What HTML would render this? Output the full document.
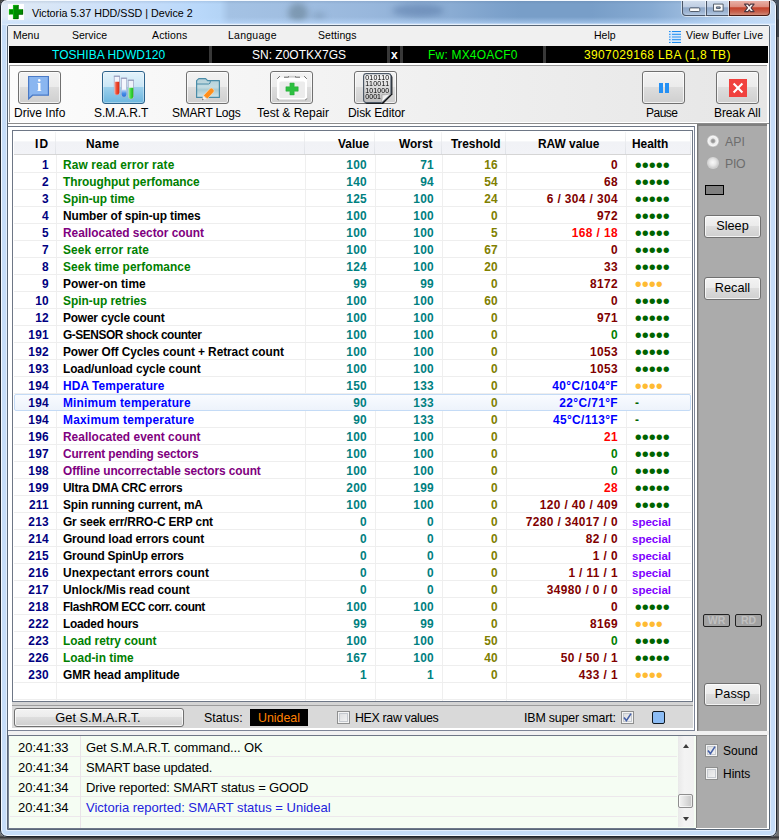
<!DOCTYPE html>
<html lang="en"><head><meta charset="utf-8"><title>Victoria 5.37 HDD/SSD | Device 2</title>
<style>
*{box-sizing:border-box;margin:0;padding:0}
html,body{width:779px;height:840px;overflow:hidden}
body{position:relative;background:linear-gradient(to bottom,#6f6f6f 0,#6f6f6f 836px,#26282c 837px,#4a4a4a 838px,#7c7c7c 840px);font-family:"Liberation Sans",sans-serif;font-size:12px;color:#000}
.win,.win *,.glow,.frame{position:absolute}
.win{left:0;top:0;width:777px;height:837px;border-radius:6px 6px 7px 7px;background:#c6ddf8;overflow:hidden}
.frame{left:0;top:-1px;width:777px;height:838px;border:1px solid #1f242c;border-radius:7px}
.glow{left:1px;top:0;width:775px;height:836px;border:1px solid #f4f9ff;border-radius:6px}
.tbar{left:1px;top:0;width:775px;height:25px;background:linear-gradient(to right,#e2ebf6 0,#dae7f6 40px,#cadffa 120px,#b9d8fa 198px,#b4d4f6 219px,#a4c2e4 228px,#a0bee1 290px,#98b7dc 370px,#8aacd3 450px,#7ca1cb 500px,#789ec8 520px,#789ec8 590px,#86aad2 650px,#a2c0e2 700px,#bcd4ee 740px,#c8dcf2 775px)}
.tsh{left:1px;top:0;width:775px;height:25px;background:linear-gradient(to bottom,rgba(240,245,250,.95) 0,rgba(240,245,250,.95) 1px,rgba(60,80,110,.12) 1px,rgba(60,80,110,0) 4px,rgba(255,255,255,0) 17px,rgba(190,220,255,.55) 23px,rgba(215,232,252,.9) 24px,rgba(215,232,252,.9) 25px)}
.title{left:32px;top:6px;font-size:10.7px;line-height:14px;white-space:pre;color:#000}
.appico{left:8px;top:4px;width:16px;height:16px;background:#fff}
.blob{border-radius:50%;filter:blur(3px)}
/* caption buttons */
.cap{top:0;height:16px;border:1px solid #4a5566;border-top:0;box-shadow:0 0 0 1px rgba(255,255,255,.55)}
.cmin{left:682px;width:25px;border-radius:0 0 0 4px;background:linear-gradient(#d3dfee 0,#bfcee3 45%,#90a8c8 52%,#9db4d2 80%,#b5c9e2 100%)}
.cmax{left:706px;width:24px;background:linear-gradient(#d3dfee 0,#bfcee3 45%,#90a8c8 52%,#9db4d2 80%,#b5c9e2 100%)}
.ccls{left:729px;width:41px;border-color:#4a1a12;border-radius:0 0 4px 0;background:linear-gradient(#eab5ac 0,#dd8e80 45%,#c4412a 52%,#c7624e 80%,#cf8a78 100%)}
/* client */
.client{left:7px;top:25px;width:763px;height:805px;border:1px solid #586676;border-radius:2px 2px 0 0;background:#fff;box-shadow:0 0 0 1px rgba(255,255,255,.5)}
.menubar{left:8px;top:26px;width:761px;height:20px;background:#f0f0f0}
.mi{top:28px;font-size:10.5px;line-height:14px;white-space:pre}
.black{left:9px;top:46px;width:759px;height:17px;background:#000}
.bsep{top:46px;width:3px;height:17px;background:#383838}
.bt{top:48px;height:15px;line-height:15px;font-size:12px;white-space:pre}
/* toolbar */
.tool{left:9px;top:65px;width:758px;height:57px;border-top:1px solid #9a9a9a;border-left:1px solid #9a9a9a;background:linear-gradient(to right,#fcfcfc,#e6e6e6)}
.tb{top:71px;width:43px;height:33px;border:1px solid #707070;border-radius:3px;background:linear-gradient(#f3f3f3 0,#ebebeb 48%,#dddddd 50%,#cfcfcf 100%);box-shadow:inset 0 0 0 1px rgba(255,255,255,.7)}
.tb.on{border-color:#2c628b;background:linear-gradient(#e4f3fb 0,#c9e6f6 48%,#9cd0ec 50%,#6cb6df 100%);box-shadow:inset 0 0 0 1px rgba(255,255,255,.35)}
.tl{top:106px;line-height:15px;height:15px;font-size:12px;white-space:pre}
.tline{left:8px;top:123px;width:761px;height:1px;background:#8c8c8c}
/* main container */
.cont{left:8px;top:126px;width:687px;height:605px;background:#fff;border-top:1px solid #6e7786;border-right:1px solid #7c8496;border-bottom:1px solid #7c8496}
.tbl{left:12px;top:130px;width:681px;height:572px;border:1px solid #6e7786;background:#fff}
.hdr{left:14px;top:132px;width:677px;height:23px;background:linear-gradient(#fff 0,#fff 40%,#f1f2f6 45%,#f2f3f7 100%);border-bottom:1px solid #d5d5d5}
.hsep{top:132px;width:1px;height:22px;background:linear-gradient(#f4f4f4,#dfe2e8)}
.hc{top:137px;height:15px;line-height:15px;font-size:11.9px;font-weight:bold;white-space:pre}
.vl{top:155px;width:1px;height:546px;background:#efefef}
.grid{left:0;top:0;width:0;height:0}
.row{left:14px;width:677px;height:18px;border-bottom:1px solid #eeeeee}
.row.sel{border:1px solid #c4dbf6;border-radius:2px;background:linear-gradient(#f9fbff,#edf3fb);margin-top:1px;height:17px}
.c{top:2px;height:17px;line-height:17px;font-size:11.9px;font-weight:bold;white-space:pre}
.sel .c{top:0px;margin-left:-1px}
.id{left:0;width:35px;text-align:right;color:#000080;letter-spacing:.3px}
.nm{left:49px}
.va{left:289px;width:64px;text-align:right;color:#008080;letter-spacing:.3px}
.wo{left:362px;width:58px;text-align:right;color:#008080;letter-spacing:.3px}
.th{left:428px;width:56px;text-align:right;color:#808000;letter-spacing:.3px}
.rw{left:492px;width:112px;text-align:right;letter-spacing:.4px}
.he{left:612px;width:65px}
.dots{left:8.8px;top:0;font-size:20px;line-height:17px;letter-spacing:0;font-weight:normal}
.dg{color:#006400}.dy{color:#ffbb33}
.sp{left:6px;top:0;color:#8000ff;font-size:11.5px}
.dash{left:9px;top:0;color:#006400}
/* status panel */
.stat{left:12px;top:702px;width:681px;height:26px;background:#d9d9d9;border-top:3px solid #d4d4d4}
.stat2{left:12px;top:705px;width:681px;height:1px;background:#9c9c9c}
.btn{border:1px solid #707070;border-radius:3px;background:linear-gradient(#f3f3f3 0,#ebebeb 48%,#dddddd 50%,#cfcfcf 100%);box-shadow:inset 0 0 0 1px rgba(255,255,255,.75);text-align:center;font-size:12px;white-space:pre}
.st{top:710px;height:15px;line-height:15px;font-size:12px;white-space:pre}
.chk{width:13px;height:13px;border:1px solid #8e8f8f;background:linear-gradient(135deg,#d9dadc,#f6f6f6);box-shadow:inset 0 0 0 1px #f4f4f4, inset 0 0 0 2px #c5c9cf}
/* right panel */
.rp{left:697px;top:124px;width:70px;height:607px;background:#ababab;border-top:2px solid #7f7f7f;border-left:1px solid #777;box-shadow:inset 1px 0 0 #999}
.rp2{left:696px;top:735px;width:71px;height:93px;background:#ababab;border-top:1px solid #8a8a8a;border-left:1px solid #858585}
.radio{width:11.4px;height:11.4px;border-radius:50%;background:radial-gradient(circle at 50% 50%,#8c8c8c 0,#a6a6a6 1.8px,#e9e9e9 2.9px,#f6f6f6 4.8px,#cfcfcf 5.7px)}
.radio.off{background:radial-gradient(circle at 48% 45%,#f8f8f8 0,#e8e8e8 3px,#cdcdcd 5.7px)}
.dis{color:#6d6d6d}
.led{border:1px solid #000;background:#808080}
.ind{border:1px solid #222;border-radius:2px;background:#a2a2a2;color:#c0c0c0;font-size:10.5px;font-weight:bold;text-align:center;line-height:11px;height:13px;width:27px}
/* log */
.log{left:8px;top:735px;width:688px;height:94px;background:#f5fdf3;border-top:1px solid #6e7786;border-left:1px solid #7a8496;border-bottom:1px solid #6e788a}
.ll{left:10px;width:667px;height:1px;background:#ede8ec}
.lt{font-size:13px;line-height:20px;height:20px;white-space:pre}
.sb{left:678px;top:736px;width:16px;height:91px;background:linear-gradient(to right,#e9e9e9,#f3f3f3 40%,#f1f1f1)}
.thumb{left:678px;top:794px;width:15px;height:14px;border:1px solid #8e8e8e;border-radius:2px;background:linear-gradient(to right,#f4f4f4,#e0e0e0 45%,#c6c6c6);box-shadow:inset 0 0 0 1px rgba(255,255,255,.6)}
.arr{width:0;height:0;border-left:3.5px solid transparent;border-right:3.5px solid transparent}

</style></head>
<body>
<div style="position:absolute;left:0;top:0;width:7px;height:7px;background:#474747"></div><div style="position:absolute;left:770px;top:0;width:9px;height:37px;background:linear-gradient(#45515e 0,#45515e 19px,#3e4248 20px,#3e4248 100%)"></div>
<div class="win">
<div class="tbar"></div><div class="blob" style="left:288px;top:3px;width:20px;height:20px;background:rgba(70,95,105,.38)"></div><div class="blob" style="left:312px;top:12px;width:14px;height:8px;background:rgba(70,95,120,.22)"></div><div class="blob" style="left:392px;top:4px;width:52px;height:13px;background:rgba(60,90,140,.34)"></div><div class="tsh"></div>
<div class="appico"></div><svg style="left:8px;top:4px" width="16" height="16" viewBox="8 4 16 16"><path d="M13.1 5H18.5V9.2H23V14.6H18.5V19H13.1V14.6H9V9.2H13.1Z" fill="#008c00"/><path d="M13.4 19V5.3H18.5M9.3 14.6V9.5H13.1" fill="none" stroke="#12c412" stroke-width=".7"/><path d="M18.2 5V9.2M22.7 9.4V14.3H18.2V18.7H13.4" fill="none" stroke="#005c00" stroke-width=".7"/></svg>
<div class="title">Victoria 5.37 HDD/SSD | Device 2</div>
<div class="cap cmin"></div><div class="cap cmax"></div><div class="cap ccls"></div>
<svg style="left:680px;top:0" width="92" height="18" viewBox="680 0 92 18"><rect x="689.6" y="7.9" width="10.2" height="3.6" rx="1" fill="#fbfbfb" stroke="#46505e" stroke-width=".9"/>
<path d="M713.5 4.1H723.1V11.1H713.5ZM716.4 6.9V8.4H720.2V6.9Z" fill="#fbfbfb" fill-rule="evenodd" stroke="#46505e" stroke-width=".9"/>
<path d="M744.5 4.1H748L749.3 5.9L750.6 4.1H754.1L751.1 7.85L754.1 11.6H750.6L749.3 9.8L748 11.6H744.5L747.5 7.85Z" fill="#fbfbfb" stroke="#503840" stroke-width="1.1" stroke-linejoin="round"/></svg>
<div class="client"></div>
<div class="menubar"></div>
<span class="mi" style="left:13px">Menu</span>
<span class="mi" style="left:72px">Service</span>
<span class="mi" style="left:152px;letter-spacing:.15px">Actions</span>
<span class="mi" style="left:228px;letter-spacing:.25px">Language</span>
<span class="mi" style="left:318px;letter-spacing:.08px">Settings</span>
<span class="mi" style="left:594px">Help</span>
<span class="mi" style="left:686px;letter-spacing:.1px">View Buffer Live</span>
<svg style="left:668px;top:30px" width="14" height="14" viewBox="668 30 14 14"><rect x="669" y="31" width="12" height="12" fill="#d6e8fb"/><path d="M669 31.5h1.6M672 31.5h9M669 34.3h1.6M672 34.3h9M669 39.7h1.6M672 39.7h9M669 42.5h1.6M672 42.5h9" stroke="#1e8cf0" stroke-width="1"/><path d="M669 37h1.6M672 37h9" stroke="#6ab0f4" stroke-width="1.6"/></svg>
<div class="black"></div>
<div class="bsep" style="left:209px"></div><div class="bsep" style="left:387px"></div><div class="bsep" style="left:400px"></div><div class="bsep" style="left:543px"></div>
<span class="bt" style="left:52px;color:#00ffff;letter-spacing:.05px">TOSHIBA HDWD120</span>
<span class="bt" style="left:252px;color:#fff">SN: Z0OTKX7GS</span>
<span class="bt" style="left:391px;color:#fff;font-weight:bold">x</span>
<span class="bt" style="left:428px;color:#00ff00;letter-spacing:.2px">Fw: MX4OACF0</span>
<span class="bt" style="left:584px;color:#ffff00;letter-spacing:.36px">3907029168 LBA (1,8 TB)</span>
<div class="tool"></div>
<div class="tline"></div>
<div class="tb" style="left:18px"></div>
<div class="tb on" style="left:102px"></div>
<div class="tb" style="left:186px"></div>
<div class="tb" style="left:270px"></div>
<div class="tb" style="left:354px"></div>
<div class="tb" style="left:642px"></div>
<div class="tb" style="left:716px"></div>
<svg style="left:16px;top:69px" width="48" height="37" viewBox="16 69 48 37"><path d="M28.6 76.5H48.4V95.2H32.6L28.6 98.8Z" fill="#8ab6f0" stroke="#4a7ac6" stroke-width="1.2" stroke-linejoin="miter"/><text x="39.3" y="91" text-anchor="middle" font-family="Liberation Serif,serif" font-weight="bold" font-size="16" fill="#fff" style="filter:grayscale(1)">i</text></svg>
<svg style="left:100px;top:69px" width="48" height="37" viewBox="100 69 48 37"><defs><linearGradient id="gr" x1="0" x2="1"><stop offset="0" stop-color="#f4a090"/><stop offset=".45" stop-color="#ee4a30"/><stop offset="1" stop-color="#d82a10"/></linearGradient><linearGradient id="gb" x1="0" x2="0" y1="0" y2="1"><stop offset="0" stop-color="#cfe0f8"/><stop offset=".5" stop-color="#4a90e8"/><stop offset="1" stop-color="#2a70d8"/></linearGradient><linearGradient id="gg" x1="0" x2="1"><stop offset="0" stop-color="#a0eea0"/><stop offset=".5" stop-color="#3ad83a"/><stop offset="1" stop-color="#20b820"/></linearGradient></defs>
<path d="M114.3 76.3V92.4a2.6 2.6 0 0 0 5.2 0V76.3Z" fill="#f2f4fc" stroke="#a4a9c8" stroke-width=".8"/><path d="M114.5 81.8V92.4a2.4 2.4 0 0 0 4.8 0V81.8Z" fill="url(#gr)"/>
<path d="M121.4 78.3V94.5a2.6 2.6 0 0 0 5.2 0V78.3Z" fill="#f4f6fd" stroke="#a4a9c8" stroke-width=".8"/><path d="M121.6 89.5V94.5a2.4 2.4 0 0 0 4.8 0V89.5Z" fill="url(#gb)"/>
<path d="M128.3 80.3V96.6a2.6 2.6 0 0 0 5.2 0V80.3Z" fill="#eef2fa" stroke="#a4a9c8" stroke-width=".8"/><path d="M128.5 87.8V96.6a2.4 2.4 0 0 0 4.8 0V87.8Z" fill="url(#gg)"/>
<path d="M113.8 76.2h6.2M120.9 78.2h6.2M127.8 80.2h6.2" stroke="#9298b8" stroke-width="1"/></svg>
<svg style="left:184px;top:69px" width="48" height="37" viewBox="184 69 48 37"><defs><linearGradient id="gf" x1="0" x2="0" y1="0" y2="1"><stop offset="0" stop-color="#b4d0d8"/><stop offset=".45" stop-color="#c4dce2"/><stop offset=".6" stop-color="#a9cad2"/><stop offset="1" stop-color="#d4e6ea"/></linearGradient></defs>
<path d="M196.6 80.6L198.8 78.6H205.6L207.6 80.7H219.4V97.4H196.6Z" fill="url(#gf)" stroke="#4a8ca8" stroke-width="1.2" stroke-linejoin="round"/><path d="M196.8 84H208.6Q210.4 84 210.4 81" fill="none" stroke="#4a8ca8" stroke-width="1"/>
<g transform="translate(-.3 .8)"><path d="M202.2 99.8L203.6 95.2L207.2 98Z" fill="#f6f6f6" stroke="#dcdcdc" stroke-width=".5"/><path d="M202.2 99.8L202.9 97.5L204.1 98.7Z" fill="#666"/>
<path d="M203.8 94.8L210.4 87.6Q211.6 86.6 212.8 87.8L214 89Q215 90.2 214 91.2L207.6 98Z" fill="#ff8f1c" stroke="#ffe2c0" stroke-width=".6"/></g></svg>
<svg style="left:268px;top:69px" width="48" height="37" viewBox="268 69 48 37"><rect x="277" y="77.4" width="30" height="22.4" rx="1.5" fill="#fff"/><rect x="279.4" y="81.6" width="25.6" height="16.4" rx="1.5" fill="#ececec"/>
<path d="M277.2 78.8L279.8 76.2M306.8 78.8L304.2 76.2M284 77.2H288.6V76.2M300 77.2H295.4V76.2" stroke="#555" stroke-width=".9" fill="none"/><rect x="289" y="75.8" width="6" height="1.8" fill="#cfcfcf"/><path d="M277.2 98.4Q277.4 99.8 278.8 99.9M306.8 98.4Q306.6 99.8 305.2 99.9" stroke="#555" stroke-width=".8" fill="none"/><path d="M279 100.1H305" stroke="#bdbdbd" stroke-width=".7"/>
<path d="M289.9 83H294.2V86.8H298.2V91.2H294.2V94.9H289.9V91.2H285.9V86.8H289.9Z" fill="#2cc040" stroke="#28a838" stroke-width=".5"/></svg>
<svg style="left:352px;top:69px" width="48" height="37" viewBox="352 69 48 37"><defs><linearGradient id="gp" x1="0" x2="0" y1="0" y2="1"><stop offset="0" stop-color="#f6f6f6"/><stop offset="1" stop-color="#bcbcbc"/></linearGradient><linearGradient id="gc" x1="0" x2="1" y1="0" y2="1"><stop offset="0" stop-color="#cfcfcf"/><stop offset=".5" stop-color="#ffffff"/><stop offset="1" stop-color="#e0e0e0"/></linearGradient></defs>
<path d="M366.6 74.8H390.2Q392.2 75 392.4 77V94.6L383 104H366.8Q364.8 103.6 364.6 101.6V77Q364.8 75 366.6 74.8Z" fill="#111"/>
<path d="M366 73.6H388.6Q390.8 73.8 391 76V93.6L381.6 102.6H366Q363.8 102.4 363.6 100.2V76Q363.8 73.8 366 73.6Z" fill="url(#gp)" stroke="#4c5866" stroke-width="1.2"/>
<path d="M381.6 102.4Q382.6 97.4 381.8 94.6Q385.6 95.2 390.8 93.8Z" fill="url(#gc)" stroke="#8c8c8c" stroke-width=".5"/>
<g style="filter:grayscale(1)" font-family="Liberation Sans,sans-serif" font-size="7" fill="#000"><text x="365.2" y="79.9" textLength="24">010110</text><text x="365.2" y="86.4" textLength="24">110011</text><text x="365.2" y="92.9" textLength="24">101000</text><text x="365.2" y="99.4" textLength="15.8">0001</text></g></svg>
<svg style="left:640px;top:69px" width="48" height="37" viewBox="640 69 48 37"><rect x="659" y="83" width="4" height="10" fill="#2490f4"/><rect x="665" y="83" width="4" height="10" fill="#2490f4"/></svg>
<svg style="left:714px;top:69px" width="48" height="37" viewBox="714 69 48 37"><rect x="729" y="79" width="18" height="18" fill="#f0413e"/><path d="M733.6 83.6L742.4 92.4M742.4 83.6L733.6 92.4" stroke="#fff" stroke-width="2.1"/></svg>
<span class="tl" style="left:14px">Drive Info</span>
<span class="tl" style="left:94px;letter-spacing:-.12px">S.M.A.R.T</span>
<span class="tl" style="left:172px;letter-spacing:-.25px">SMART Logs</span>
<span class="tl" style="left:257px">Test &amp; Repair</span>
<span class="tl" style="left:348px;letter-spacing:-.1px">Disk Editor</span>
<span class="tl" style="left:646px;letter-spacing:-.5px">Pause</span>
<span class="tl" style="left:714px;letter-spacing:-.1px">Break All</span>
<div class="cont"></div>
<div class="tbl"></div>
<div class="hdr"></div>
<div class="hsep" style="left:55px"></div><div class="hsep" style="left:304px"></div><div class="hsep" style="left:374px"></div><div class="hsep" style="left:441px"></div><div class="hsep" style="left:505px"></div><div class="hsep" style="left:625px"></div><div class="hsep" style="left:690px"></div>
<div class="vl" style="left:56px"></div><div class="vl" style="left:305px"></div><div class="vl" style="left:375px"></div><div class="vl" style="left:442px"></div><div class="vl" style="left:506px"></div><div class="vl" style="left:626px"></div>
<span class="hc" style="left:35px;letter-spacing:1.2px">ID</span>
<span class="hc" style="left:86px;letter-spacing:.25px">Name</span>
<span class="hc" style="left:338px">Value</span>
<span class="hc" style="left:399px">Worst</span>
<span class="hc" style="left:451px">Treshold</span>
<span class="hc" style="left:538px">RAW value</span>
<span class="hc" style="left:632px">Health</span>
<div class="grid">
<div class="row" style="top:155px"><span class="c id">1</span><span class="c nm" style="color:#008000;letter-spacing:0.123px">Raw read error rate</span><span class="c va">100</span><span class="c wo">71</span><span class="c th">16</span><span class="c rw" style="color:#800000">0</span><span class="c he"><span class="dots dg">•••••</span></span></div>
<div class="row" style="top:172px"><span class="c id">2</span><span class="c nm" style="color:#008000;letter-spacing:-0.034px">Throughput perfomance</span><span class="c va">140</span><span class="c wo">94</span><span class="c th">54</span><span class="c rw" style="color:#800000">68</span><span class="c he"><span class="dots dg">•••••</span></span></div>
<div class="row" style="top:189px"><span class="c id">3</span><span class="c nm" style="color:#008000;letter-spacing:-0.025px">Spin-up time</span><span class="c va">125</span><span class="c wo">100</span><span class="c th">24</span><span class="c rw" style="color:#800000">6 / 304 / 304</span><span class="c he"><span class="dots dg">•••••</span></span></div>
<div class="row" style="top:206px"><span class="c id">4</span><span class="c nm" style="color:#000;letter-spacing:-0.107px">Number of spin-up times</span><span class="c va">100</span><span class="c wo">100</span><span class="c th">0</span><span class="c rw" style="color:#800000">972</span><span class="c he"><span class="dots dg">•••••</span></span></div>
<div class="row" style="top:223px"><span class="c id">5</span><span class="c nm" style="color:#800080;letter-spacing:-0.017px">Reallocated sector count</span><span class="c va">100</span><span class="c wo">100</span><span class="c th">5</span><span class="c rw" style="color:#ff0000">168 / 18</span><span class="c he"><span class="dots dg">•••••</span></span></div>
<div class="row" style="top:240px"><span class="c id">7</span><span class="c nm" style="color:#008000;letter-spacing:0.143px">Seek error rate</span><span class="c va">100</span><span class="c wo">100</span><span class="c th">67</span><span class="c rw" style="color:#800000">0</span><span class="c he"><span class="dots dg">•••••</span></span></div>
<div class="row" style="top:257px"><span class="c id">8</span><span class="c nm" style="color:#008000;letter-spacing:0.073px">Seek time perfomance</span><span class="c va">124</span><span class="c wo">100</span><span class="c th">20</span><span class="c rw" style="color:#800000">33</span><span class="c he"><span class="dots dg">•••••</span></span></div>
<div class="row" style="top:274px"><span class="c id">9</span><span class="c nm" style="color:#000;letter-spacing:0.066px">Power-on time</span><span class="c va">99</span><span class="c wo">99</span><span class="c th">0</span><span class="c rw" style="color:#800000">8172</span><span class="c he"><span class="dots dy">••••</span></span></div>
<div class="row" style="top:291px"><span class="c id">10</span><span class="c nm" style="color:#008000;letter-spacing:-0.015px">Spin-up retries</span><span class="c va">100</span><span class="c wo">100</span><span class="c th">60</span><span class="c rw" style="color:#800000">0</span><span class="c he"><span class="dots dg">•••••</span></span></div>
<div class="row" style="top:308px"><span class="c id">12</span><span class="c nm" style="color:#000;letter-spacing:-0.172px">Power cycle count</span><span class="c va">100</span><span class="c wo">100</span><span class="c th">0</span><span class="c rw" style="color:#800000">971</span><span class="c he"><span class="dots dg">•••••</span></span></div>
<div class="row" style="top:325px"><span class="c id">191</span><span class="c nm" style="color:#000;letter-spacing:-0.433px">G-SENSOR shock counter</span><span class="c va">100</span><span class="c wo">100</span><span class="c th">0</span><span class="c rw" style="color:#008000">0</span><span class="c he"><span class="dots dg">•••••</span></span></div>
<div class="row" style="top:342px"><span class="c id">192</span><span class="c nm" style="color:#000;letter-spacing:-0.076px">Power Off Cycles count + Retract count</span><span class="c va">100</span><span class="c wo">100</span><span class="c th">0</span><span class="c rw" style="color:#800000">1053</span><span class="c he"><span class="dots dg">•••••</span></span></div>
<div class="row" style="top:359px"><span class="c id">193</span><span class="c nm" style="color:#000;letter-spacing:-0.079px">Load/unload cycle count</span><span class="c va">100</span><span class="c wo">100</span><span class="c th">0</span><span class="c rw" style="color:#800000">1053</span><span class="c he"><span class="dots dg">•••••</span></span></div>
<div class="row" style="top:376px"><span class="c id">194</span><span class="c nm" style="color:#0000ff;letter-spacing:0.115px">HDA Temperature</span><span class="c va">150</span><span class="c wo">133</span><span class="c th">0</span><span class="c rw" style="color:#0000ff">40°C/104°F</span><span class="c he"><span class="dots dy">••••</span></span></div>
<div class="row sel" style="top:393px"><span class="c id">194</span><span class="c nm" style="color:#0000ff;letter-spacing:0.183px">Minimum temperature</span><span class="c va">90</span><span class="c wo">133</span><span class="c th">0</span><span class="c rw" style="color:#0000ff">22°C/71°F</span><span class="c he"><span class="dash">-</span></span></div>
<div class="row" style="top:410px"><span class="c id">194</span><span class="c nm" style="color:#0000ff;letter-spacing:0.238px">Maximum temperature</span><span class="c va">90</span><span class="c wo">133</span><span class="c th">0</span><span class="c rw" style="color:#0000ff">45°C/113°F</span><span class="c he"><span class="dash">-</span></span></div>
<div class="row" style="top:427px"><span class="c id">196</span><span class="c nm" style="color:#800080;letter-spacing:0.036px">Reallocated event count</span><span class="c va">100</span><span class="c wo">100</span><span class="c th">0</span><span class="c rw" style="color:#ff0000">21</span><span class="c he"><span class="dots dg">•••••</span></span></div>
<div class="row" style="top:444px"><span class="c id">197</span><span class="c nm" style="color:#800080;letter-spacing:-0.117px">Current pending sectors</span><span class="c va">100</span><span class="c wo">100</span><span class="c th">0</span><span class="c rw" style="color:#008000">0</span><span class="c he"><span class="dots dg">•••••</span></span></div>
<div class="row" style="top:461px"><span class="c id">198</span><span class="c nm" style="color:#800080;letter-spacing:-0.091px">Offline uncorrectable sectors count</span><span class="c va">100</span><span class="c wo">100</span><span class="c th">0</span><span class="c rw" style="color:#008000">0</span><span class="c he"><span class="dots dg">•••••</span></span></div>
<div class="row" style="top:478px"><span class="c id">199</span><span class="c nm" style="color:#000;letter-spacing:-0.219px">Ultra DMA CRC errors</span><span class="c va">200</span><span class="c wo">199</span><span class="c th">0</span><span class="c rw" style="color:#ff0000">28</span><span class="c he"><span class="dots dg">•••••</span></span></div>
<div class="row" style="top:495px"><span class="c id">211</span><span class="c nm" style="color:#000;letter-spacing:-0.148px">Spin running current, mA</span><span class="c va">100</span><span class="c wo">100</span><span class="c th">0</span><span class="c rw" style="color:#800000">120 / 40 / 409</span><span class="c he"><span class="dots dg">•••••</span></span></div>
<div class="row" style="top:512px"><span class="c id">213</span><span class="c nm" style="color:#000;letter-spacing:-0.155px">Gr seek err/RRO-C ERP cnt</span><span class="c va">0</span><span class="c wo">0</span><span class="c th">0</span><span class="c rw" style="color:#800000">7280 / 34017 / 0</span><span class="c he"><span class="sp">special</span></span></div>
<div class="row" style="top:529px"><span class="c id">214</span><span class="c nm" style="color:#000;letter-spacing:-0.126px">Ground load errors count</span><span class="c va">0</span><span class="c wo">0</span><span class="c th">0</span><span class="c rw" style="color:#800000">82 / 0</span><span class="c he"><span class="sp">special</span></span></div>
<div class="row" style="top:546px"><span class="c id">215</span><span class="c nm" style="color:#000;letter-spacing:-0.242px">Ground SpinUp errors</span><span class="c va">0</span><span class="c wo">0</span><span class="c th">0</span><span class="c rw" style="color:#800000">1 / 0</span><span class="c he"><span class="sp">special</span></span></div>
<div class="row" style="top:563px"><span class="c id">216</span><span class="c nm" style="color:#000;letter-spacing:0.05px">Unexpectant errors count</span><span class="c va">0</span><span class="c wo">0</span><span class="c th">0</span><span class="c rw" style="color:#800000">1 / 11 / 1</span><span class="c he"><span class="sp">special</span></span></div>
<div class="row" style="top:580px"><span class="c id">217</span><span class="c nm" style="color:#000;letter-spacing:-0.003px">Unlock/Mis read count</span><span class="c va">0</span><span class="c wo">0</span><span class="c th">0</span><span class="c rw" style="color:#800000">34980 / 0 / 0</span><span class="c he"><span class="sp">special</span></span></div>
<div class="row" style="top:597px"><span class="c id">218</span><span class="c nm" style="color:#000;letter-spacing:-0.42px">FlashROM ECC corr. count</span><span class="c va">100</span><span class="c wo">100</span><span class="c th">0</span><span class="c rw" style="color:#800000">0</span><span class="c he"><span class="dots dg">•••••</span></span></div>
<div class="row" style="top:614px"><span class="c id">222</span><span class="c nm" style="color:#000;letter-spacing:-0.269px">Loaded hours</span><span class="c va">99</span><span class="c wo">99</span><span class="c th">0</span><span class="c rw" style="color:#800000">8169</span><span class="c he"><span class="dots dy">••••</span></span></div>
<div class="row" style="top:631px"><span class="c id">223</span><span class="c nm" style="color:#008000;letter-spacing:-0.021px">Load retry count</span><span class="c va">100</span><span class="c wo">100</span><span class="c th">50</span><span class="c rw" style="color:#008000">0</span><span class="c he"><span class="dots dg">•••••</span></span></div>
<div class="row" style="top:648px"><span class="c id">226</span><span class="c nm" style="color:#008000;letter-spacing:0.001px">Load-in time</span><span class="c va">167</span><span class="c wo">100</span><span class="c th">40</span><span class="c rw" style="color:#800000">50 / 50 / 1</span><span class="c he"><span class="dots dg">•••••</span></span></div>
<div class="row" style="top:665px"><span class="c id">230</span><span class="c nm" style="color:#000;letter-spacing:-0.093px">GMR head amplitude</span><span class="c va">1</span><span class="c wo">1</span><span class="c th">0</span><span class="c rw" style="color:#800000">433 / 1</span><span class="c he"><span class="dots dy">••••</span></span></div>
</div>
<div class="row" style="top:682px"></div>
<div class="stat"></div><div class="stat2"></div>
<div class="btn" style="left:14px;top:708px;width:170px;height:19px;line-height:18px;font-size:12.8px;text-indent:-2px">Get S.M.A.R.T.</div>
<span class="st" style="left:204px;top:711px;font-size:12.4px">Status:</span>
<div style="left:250px;top:709px;width:58px;height:17px;background:#000"></div>
<span class="st" style="left:258px;top:711px;font-size:12.4px;color:#ff8000">Unideal</span>
<div class="chk" style="left:337px;top:711px"></div>
<span class="st" style="left:355px;top:711px;font-size:12.4px;letter-spacing:-.34px">HEX raw values</span>
<span class="st" style="left:524px;top:711px;font-size:12.4px;letter-spacing:-.16px">IBM super smart:</span>
<div class="chk" style="left:621px;top:711px"></div><svg style="left:621px;top:711px" width="13" height="13" viewBox="0 0 13 13"><path d="M3 6.6L5.4 9.6L10 2.6" fill="none" stroke="#4560a8" stroke-width="1.6"/></svg>
<div style="left:652px;top:711px;width:13px;height:13px;border:1px solid #101820;border-radius:2px;background:#8cbcf4"></div>
<div class="rp"></div>
<div class="radio" style="left:707.2px;top:135.2px"></div><span class="st dis" style="left:725px;top:135px;font-size:12.3px">API</span>
<div class="radio off" style="left:707.2px;top:157.3px"></div><span class="st dis" style="left:725px;top:157px;font-size:12.3px;letter-spacing:-.3px">PIO</span>
<div class="led" style="left:705px;top:185px;width:19px;height:10px"></div>
<div class="btn" style="left:704px;top:215px;width:57px;height:23px;line-height:21px;font-size:12.7px">Sleep</div>
<div class="btn" style="left:704px;top:277px;width:57px;height:23px;line-height:21px;font-size:12.7px">Recall</div>
<div class="ind" style="left:703px;top:614px">WR</div><div class="ind" style="left:735px;top:614px">RD</div>
<div class="btn" style="left:704px;top:683px;width:57px;height:23px;line-height:21px;font-size:12.7px">Passp</div>
<div style="left:8px;top:731px;width:761px;height:4px;background:#f1f1f1"></div><div class="log"></div>
<div class="ll" style="top:756px"></div><div class="ll" style="top:776px"></div><div class="ll" style="top:796px"></div><div class="ll" style="top:816px"></div>
<div style="left:80px;top:736px;width:1px;height:92px;background:#e9e4e8"></div>
<span class="lt" style="left:18px;top:738px">20:41:33</span><span class="lt" style="left:86px;top:738px;letter-spacing:-.15px">Get S.M.A.R.T. command... OK</span>
<span class="lt" style="left:18px;top:758px">20:41:34</span><span class="lt" style="left:86px;top:758px;letter-spacing:-.26px">SMART base updated.</span>
<span class="lt" style="left:18px;top:778px">20:41:34</span><span class="lt" style="left:86px;top:778px;letter-spacing:-.15px">Drive reported: SMART status = GOOD</span>
<span class="lt" style="left:18px;top:798px">20:41:34</span><span class="lt" style="left:86px;top:798px;color:#2222dd">Victoria reported: SMART status = Unideal</span>
<div class="sb"></div>
<div class="thumb"></div>
<div class="arr" style="left:683px;top:744px;border-bottom:4px solid #3c3c3c"></div>
<div class="arr" style="left:683px;top:817px;border-top:4px solid #3c3c3c"></div>
<div class="rp2"></div><div style="left:696px;top:828px;width:73px;height:1px;background:#fff"></div>
<div class="chk" style="left:705px;top:744px"></div><svg style="left:705px;top:744px" width="13" height="13" viewBox="0 0 13 13"><path d="M3 6.6L5.4 9.6L10 2.6" fill="none" stroke="#4560a8" stroke-width="1.6"/></svg><span class="st" style="left:723px;top:744px">Sound</span>
<div class="chk" style="left:705px;top:767px"></div><span class="st" style="left:723px;top:767px">Hints</span>
</div>
<div class="glow"></div><div class="frame"></div>
</body></html>
